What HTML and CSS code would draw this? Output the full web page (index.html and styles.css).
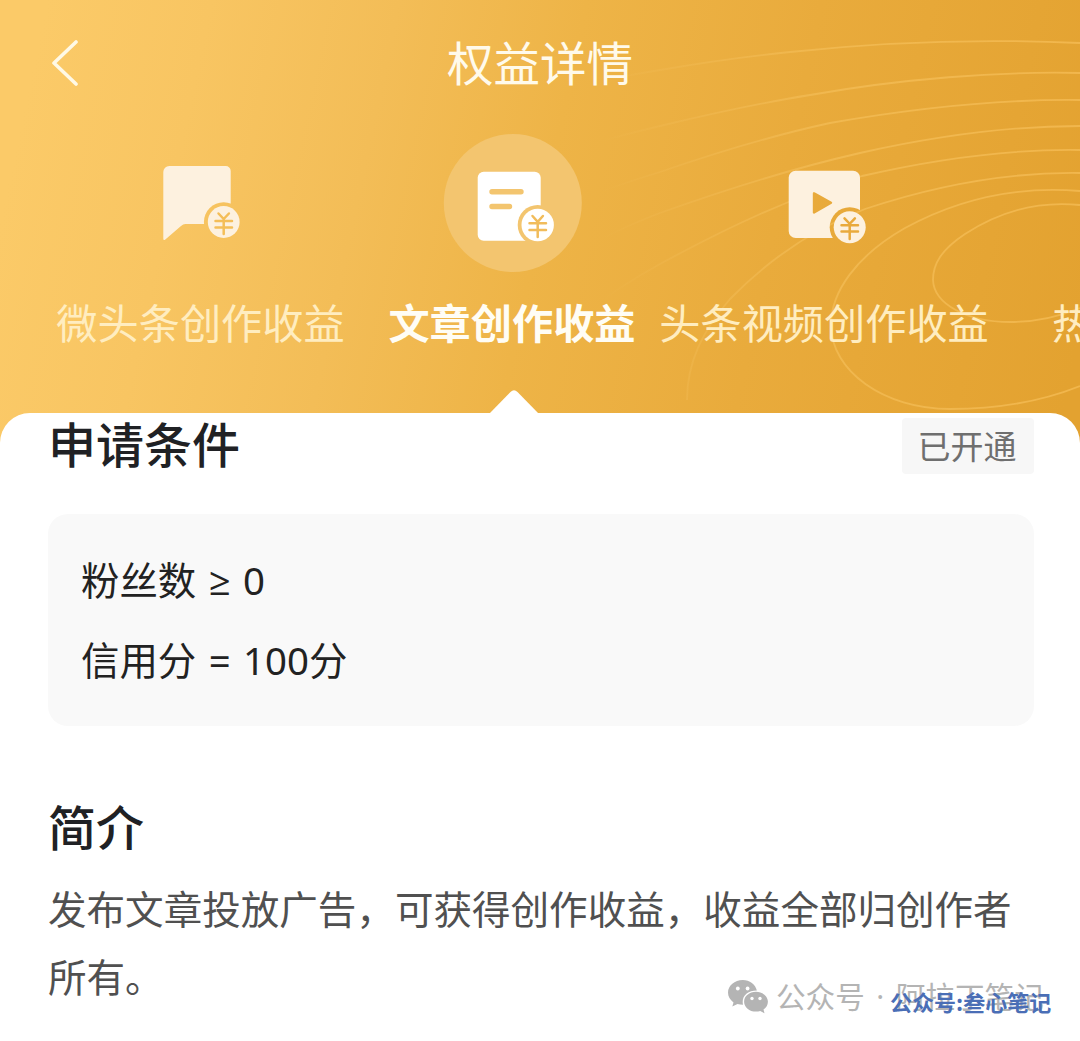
FILE: index.html
```html
<!DOCTYPE html>
<html lang="zh-CN">
<head>
<meta charset="utf-8">
<title>权益详情</title>
<link rel="stylesheet" href="styles.css">
</head>
<body>
<div class="page">
  <header class="hero">
    <svg class="rings" viewBox="0 0 1080 440" aria-hidden="true">
      <defs>
        <linearGradient id="fade" x1="600" x2="1080" y1="0" y2="0" gradientUnits="userSpaceOnUse">
          <stop offset="0" stop-color="#ffd480" stop-opacity="0"/>
          <stop offset=".5" stop-color="#ffd072" stop-opacity=".38"/>
          <stop offset="1" stop-color="#ffca68" stop-opacity=".5"/>
        </linearGradient>
      </defs>
      <g fill="none" stroke="url(#fade)" stroke-width="1.8">
        <path d="M1080 205C1040 201 1000 211 965 234C941 250 933 264 933 280C934 304 967 322 1010 322C1036 322 1058 317 1080 308"/>
        <path d="M1080 191C1020 186 960 198 905 228C856 256 831 292 831 325C831 371 884 409 950 409C1000 409 1045 400 1080 386"/>
        <path d="M1080 173C1010 172 940 184 865 209C813 229 770 258 730 299C703 330 687 362 687 400"/>
        <path d="M1080 150C1010 149 940 158 862 176C790 198 730 226 660 264Q620 286 580 316"/>
        <path d="M1080 126C1010 126 940 135 860 153C790 169 730 188 660 213Q620 228 570 255"/>
        <path d="M1080 100C1000 99 910 109 830 123C770 136 715 153 660 172Q620 184 570 203"/>
        <path d="M1080 73C1000 71 900 79 810 95C760 103 710 114 660 126Q610 138 570 150"/>
        <path d="M1080 43C990 39 900 40 790 52C740 57 700 63 660 70Q610 78 570 88"/>
      </g>
    </svg>
    <nav class="navbar">
      <svg class="back" viewBox="0 0 30 48"><path d="M26 4 4 25 26 46" fill="none" stroke="#fff9e6" stroke-width="3.6" stroke-linecap="round" stroke-linejoin="round"/></svg>
      <h1 class="title">权益详情</h1>
    </nav>
    <div class="tabs">
      <div class="tab">
        <svg class="tab-icon" viewBox="0 0 140 140">
          <mask id="cut1"><path fill="#fff" d="M0 0H140V140H0z"/><circle class="hole" cx="92.7" cy="89" r="19.8"/></mask>
          <path mask="url(#cut1)" d="M38.3 33H94.7a5 5 0 0 1 5 5V91H54.5Q52 91 50 93L34.3 106.5Q32.3 108 32.3 105.5V39a6 6 0 0 1 6-6z"/>
          <circle cx="92.7" cy="89" r="15.9"/>
          <path class="yen" d="M87.5 80.5l5.2 5.5 5.2-5.5M84.500 88h16.500M84.500 94.5h16.500M92.7 86v15" stroke="#f4be58"/>
        </svg>
        <span class="label">微头条创作收益</span>
      </div>
      <div class="tab active">
        <svg class="tab-icon" viewBox="0 0 140 140">
          <circle cx="70.8" cy="70" r="69" fill="#f3c56f"/>
          <mask id="cut2"><path fill="#fff" d="M0 0H140V140H0z"/><circle class="hole" cx="95.7" cy="92" r="20"/><path d="M50 58.7H79M50 73.5H67.5" stroke="#000" stroke-width="5.4" stroke-linecap="round"/></mask>
          <rect mask="url(#cut2)" x="35.7" y="38.7" width="63" height="69" rx="6"/>
          <circle cx="95.7" cy="92" r="16.2"/>
          <path class="yen" d="M90.5 83l5.2 5.8 5.2-5.8M87.500 90.3h16.500M87.500 97h16.500M95.7 88.5v15.5" stroke="#f1bc5b"/>
        </svg>
        <span class="label">文章创作收益</span>
      </div>
      <div class="tab">
        <svg class="tab-icon" viewBox="0 0 140 140">
          <mask id="cut3"><path fill="#fff" d="M0 0H140V140H0z"/><circle class="hole" cx="95.7" cy="94.3" r="20"/><path class="hole" d="M60 60.3 77 69.7 60 79.5z" stroke="#000" stroke-width="2.4" stroke-linejoin="round"/></mask>
          <rect mask="url(#cut3)" x="34.7" y="37.7" width="71.3" height="67.3" rx="7"/>
          <circle cx="95.7" cy="94.3" r="16"/>
          <path class="yen" d="M90.5 85.3l5.2 5.5 5.2-5.5M87.500 92.3h16.500M87.500 98.6h16.500M95.7 90.8v15.2" stroke="#e9aa3c"/>
        </svg>
        <span class="label">头条视频创作收益</span>
      </div>
      <div class="tab next"><span class="label">热</span></div>
    </div>
  </header>

  <main class="sheet">
    <svg class="pointer" viewBox="0 0 50 26"><path d="M0 25 21.5 3Q25-.5 28.5 3L50 25V26H0z" fill="#fff"/></svg>
    <section class="requirements">
      <div class="section-head">
        <h2>申请条件</h2>
        <span class="badge">已开通</span>
      </div>
      <div class="conditions">
        <p>粉丝数 ≥ 0</p>
        <p>信用分 = 100分</p>
      </div>
    </section>
    <section class="intro">
      <h2>简介</h2>
      <p>发布文章投放广告，可获得创作收益，收益全部归创作者所有。</p>
    </section>
  </main>

  <div class="source">
    <svg class="wechat" viewBox="0 0 40 34">
      <path fill="#b4b4b4" d="M14.8 0C6.600 0 0 5.600 0 12.600c0 4 2.100 7.500 5.500 9.800L4.300 26.600l5.200-2.700c1.700.5 3.400.8 5.500.8A11 11 0 0 1 14.700 21.500C14.700 15.200 20.800 10.500 28.900 10.600C27.500 4.500 21.700 0 14.800 0z"/>
      <path fill="#b4b4b4" d="M28 11.800c-6.700 0-11.900 4.400-11.900 9.900s5.200 9.900 11.900 9.900c1.500 0 2.900-.2 4.200-.6l4.300 2.300-1-3.700c2.700-1.800 4.400-4.600 4.400-7.900 0-5.500-5.300-9.900-11.900-9.900z"/>
      <g fill="#fff"><circle cx="9.800" cy="8.500" r="1.900"/><circle cx="19.600" cy="8.500" r="1.900"/><circle cx="24" cy="18.500" r="1.700"/><circle cx="32" cy="18.500" r="1.700"/></g>
    </svg>
    <span class="source-kind">公众号</span><span class="source-dot">·</span><span>阿拉丁笔记</span>
  </div>
  <div class="stamp">公众号:叁心笔记</div>
</div>
</body>
</html>
```
FILE: styles.css
```css
* { box-sizing: border-box; }

body, h1, h2, p { margin: 0; }

body {
  font-family: "Noto Sans CJK SC", sans-serif;
  background: #fff;
}

.page {
  position: relative;
  width: 1080px;
  height: 1041px;
  overflow: hidden;
  background: #fff;
}

.hero {
  position: relative;
  height: 445px;
  overflow: hidden;
  background: linear-gradient(102deg, #fbca68 4%, #f8c562 18%, #f3bd57 34%, #eeb447 50%, #e9ab3c 70%, #e3a230 98%);
}

.rings {
  position: absolute;
  inset: 0 auto auto 0;
  width: 1080px;
  height: 440px;
}

.navbar {
  position: relative;
  display: grid;
  grid-template-columns: 130px 1fr 130px;
  align-items: center;
  height: 133px;
  padding-bottom: 11px;
}

.back {
  width: 30px;
  height: 48px;
  margin-left: 50px;
  margin-top: 2px;
}

.title {
  color: #fffaeb;
  font-size: 46.500px;
  font-weight: 400;
  line-height: 60px;
  text-align: center;
}

.tabs {
  position: relative;
  display: grid;
  grid-template-columns: 311px 312px 312px 312px;
  padding-left: 45px;
}

.tab {
  display: flex;
  flex-direction: column;
  align-items: center;
  gap: 18px;
}

.tab-icon {
  width: 140px;
  height: 140px;
  fill: #fdf1df;
}

.active .tab-icon { fill: #fff; }

.hole { fill: #000; }

.yen {
  fill: none;
  stroke-width: 2.500;
  stroke-linecap: round;
}

.label {
  color: #ffedc0;
  font-size: 41.200px;
  line-height: 60px;
  white-space: nowrap;
}

.active .label {
  color: #fffdf5;
  font-weight: 700;
}

.next {
  align-items: flex-start;
  justify-content: flex-end;
  padding-left: 72px;
}

.sheet {
  position: relative;
  height: 628px;
  margin-top: -32px;
  padding: 0 46px 0 48px;
  border-radius: 30px 30px 0 0;
  background: #fff;
}

.pointer {
  position: absolute;
  left: 489px;
  top: -24px;
  width: 50px;
  height: 26px;
}

.section-head {
  display: flex;
  justify-content: space-between;
  align-items: flex-start;
  height: 101px;
}

h2 {
  color: #202124;
  font-size: 48px;
  font-weight: 500;
  line-height: 58px;
}

.badge {
  width: 132px;
  height: 56px;
  margin-top: 5px;
  padding-right: 2px;
  border-radius: 4px;
  background: #f7f7f7;
  color: #6f6f6f;
  font-size: 33px;
  line-height: 54px;
  text-align: center;
}

.conditions {
  height: 212px;
  padding: 26px 33px;
  border-radius: 20px;
  background: #f9f9f9;
  color: #222;
  font-family: "Noto Sans", "Open Sans", "Noto Sans CJK SC", sans-serif;
  font-size: 38.400px;
  line-height: 80px;
  word-spacing: 2.500px;
}

.intro h2 { padding-top: 70px; height: 147px; }

.intro p {
  width: 975px;
  color: #505050;
  font-size: 38.550px;
  line-height: 68px;
}

.source {
  position: absolute;
  left: 728px;
  top: 976px;
  display: flex;
  align-items: center;
  height: 42px;
  color: #b4b4b4;
  font-size: 29.600px;
  line-height: 38px;
}

.source span { padding-bottom: 2px; }

.wechat {
  width: 40px;
  height: 34px;
  margin-right: 8px;
}

.source-dot {
  width: 31px;
  font-family: "Noto Sans", sans-serif;
  text-align: center;
}

.stamp {
  position: absolute;
  left: 890px;
  top: 986px;
  color: #4a6eb6;
  font-size: 22px;
  font-weight: 700;
  line-height: 30px;
  white-space: nowrap;
}
```
